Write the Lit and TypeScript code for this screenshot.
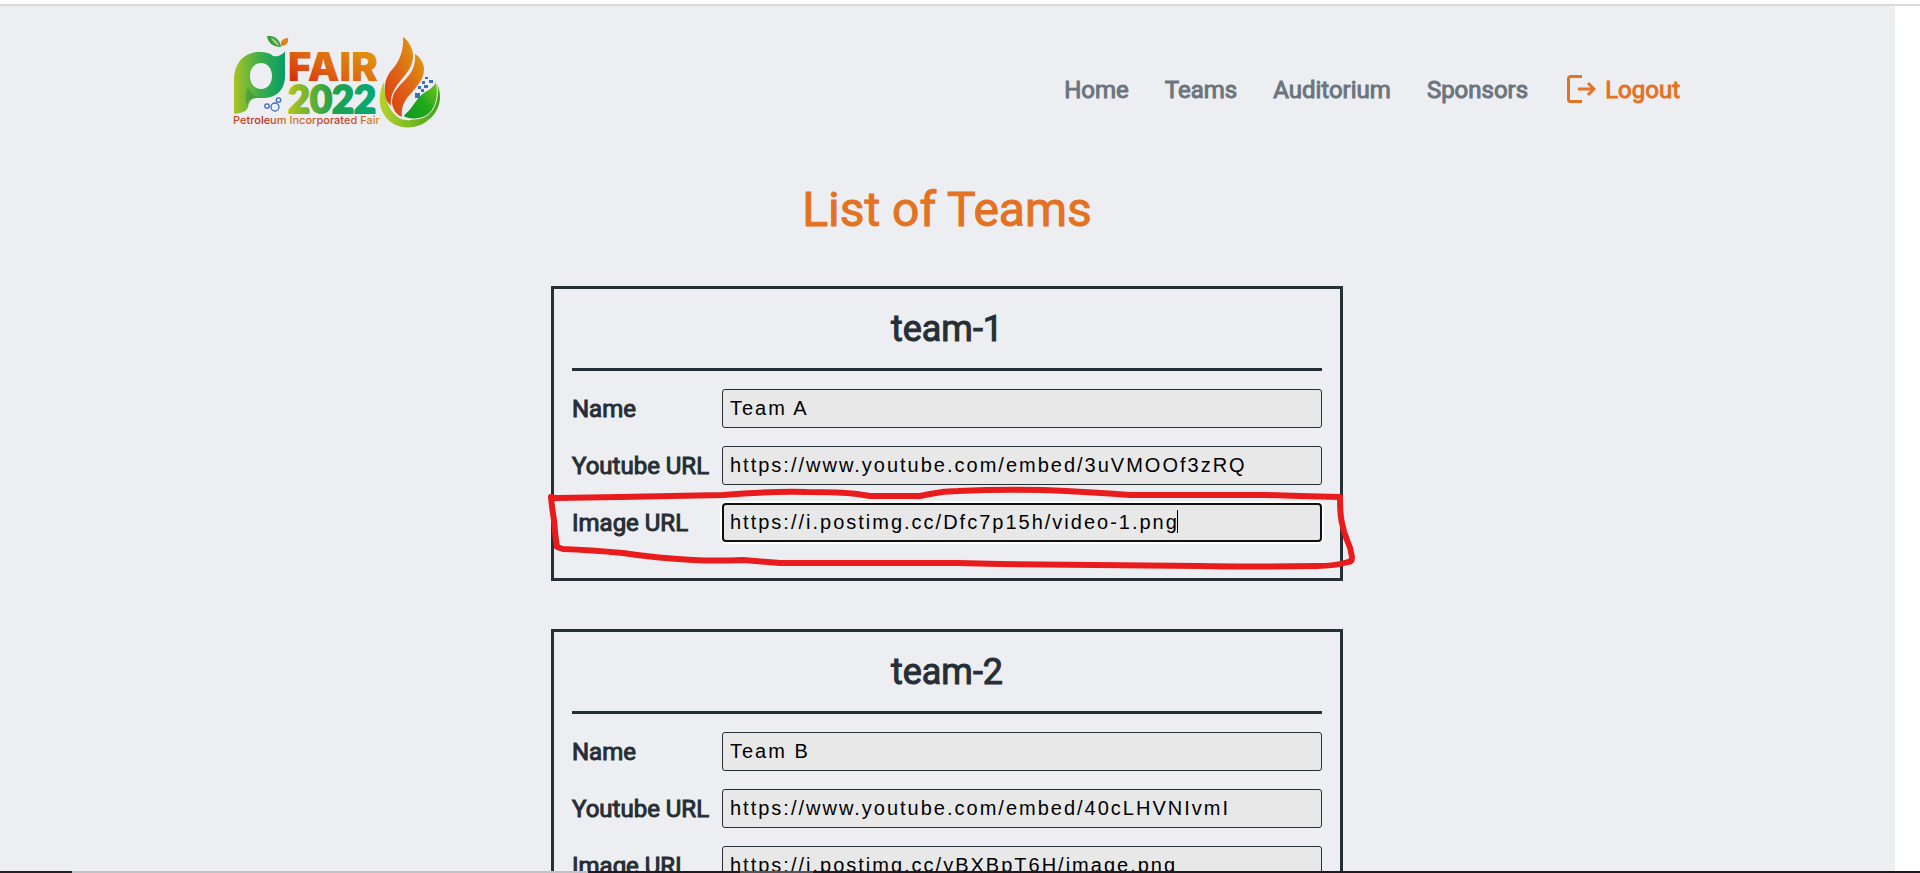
import { LitElement, html, css, svg, nothing } from "lit";
import { customElement, property } from "lit/decorators.js";

interface Team {
  id: string;
  name: string;
  video: string;
  image: string;
}

const teams: Team[] = [
  {
    id: "team-1",
    name: "Team A",
    video: "https://www.youtube.com/embed/3uVMOOf3zRQ",
    image: "https://i.postimg.cc/Dfc7p15h/video-1.png",
  },
  {
    id: "team-2",
    name: "Team B",
    video: "https://www.youtube.com/embed/40cLHVNIvmI",
    image: "https://i.postimg.cc/yBXBpT6H/image.png",
  },
];

@customElement("fair-logo")
export class FairLogo extends LitElement {
  static styles = css`
    :host { display: block; }
    svg { display: block; width: 210px; height: 96px; }
    .fair { font-family: Inter, sans-serif; font-weight: 900; font-size: 40px; }
    .year { font-family: Lato, sans-serif; font-weight: 900; font-size: 38px; stroke-width: 2px; }
    .small { font-family: Inter, sans-serif; font-weight: 500; font-size: 11px; }
  `;

  render() {
    return html`
      <svg viewBox="13 11 210 96" role="img" aria-label="PI Fair 2022">
        <defs>
          <linearGradient id="p" x1="0" x2="1"><stop offset="0" stop-color="#a9c322" /><stop offset=".5" stop-color="#3fae4a" /><stop offset="1" stop-color="#079c68" /></linearGradient>
          <linearGradient id="warm" x1="0" x2="1" y1="1" y2="0"><stop offset="0" stop-color="#d8170e" /><stop offset=".45" stop-color="#dd6410" /><stop offset="1" stop-color="#e3a60a" /></linearGradient>
          <linearGradient id="cool" x1="0" x2="1"><stop offset="0" stop-color="#b5c41c" /><stop offset=".5" stop-color="#23a04a" /><stop offset="1" stop-color="#04a878" /></linearGradient>
          <linearGradient id="tag" x1="0" x2="1"><stop offset="0" stop-color="#cf4a1c" /><stop offset=".2" stop-color="#c22a26" /><stop offset=".4" stop-color="#cf7a22" /><stop offset=".7" stop-color="#c8322a" /><stop offset="1" stop-color="#d09020" /></linearGradient>
          <linearGradient id="fl" x1="0" x2="1" y1="1" y2="0"><stop offset="0" stop-color="#dd3f12" /><stop offset=".5" stop-color="#de6516" /><stop offset="1" stop-color="#e09a10" /></linearGradient>
          <linearGradient id="bowl" x1="0" x2="1"><stop offset="0" stop-color="#b9d22c" /><stop offset="1" stop-color="#3fa414" /></linearGradient>
          <linearGradient id="leaf" x1="0" x2="1" y1="1" y2="0"><stop offset="0" stop-color="#0b9a1a" /><stop offset=".5" stop-color="#1fa81c" /><stop offset="1" stop-color="#7cc31c" /></linearGradient>
        </defs>
        <path fill="url(#p)" fill-rule="evenodd" d="M15 89V55C15 38 25 27 40 27c7 0 11 1 14 4 4 1 10-1 12-5v25c0 15-10 22-22 22h-6c-6 0-8 4-9 9-1 5-8 6-14 7zM42 38c-7 0-11 6-11 13s4 13 11 13 11-6 11-13-4-13-11-13z" />
        <path fill="#1b7a3c" opacity=".35" d="M29 62c2 5 6 10 14 11h-5c-6 0-9 3-10 8-2-6-2-13 1-19z" />
        <path fill="#3a9c40" d="M48 11c8-1 13 4 14 11-8 0-13-4-14-11z" />
        <path fill="#9fd18a" d="M52 13c4 1 7 4 8 8-4-2-6-4-8-8z" />
        <path fill="#e0851a" d="M62 21c-1-5 2-8 7-8 1 5-2 8-7 8z" />
        <g fill="none" stroke="#3b6fc2" stroke-width="1.3"><circle cx="56" cy="82" r="4" /><circle cx="48" cy="81" r="2.200" /><circle cx="59.500" cy="75" r="2.200" /></g>
        <text class="fair" x="69" y="56" fill="url(#warm)">FAIR</text>
        <text class="year" x="69" y="88" fill="url(#cool)" stroke="url(#cool)">2022</text>
        <text class="small" x="14" y="99" fill="url(#tag)">Petroleum Incorporated Fair</text>
        <path fill="url(#bowl)" d="M165 57c-5 9-6 22-1 31 6 11 17 16 30 14 17-3 27-17 27-30 0-7-2-11-4-15-1 16-10 34-25 38-14 2-26-10-27-38z" />
        <path fill="url(#fl)" d="M184 12c1 12-3 22-8 29-7 8-11 14-10 26 0 6 2 10 6 14-1-9 2-15 7-22 8-10 16-18 15-30-1-7-5-14-10-17z" />
        <path fill="url(#fl)" d="M196 29c1 12-4 20-11 27-7 7-12 12-12 22 1 7 5 12 10 14-1-8 1-13 5-19 8-10 17-17 17-29 0-6-4-12-9-15z" />
        <path fill="url(#leaf)" stroke="#edeef2" d="M217 56c-4 10-11 8-18 17-5 6-7 11-15 18 5 4 16 4 23 0 9-5 14-20 10-35z" />
        <g fill="#3b6fc2"><path d="M196 68h5v5h-5zM202 64h3v3h-3zM199 61h3v3h-3zM205 60h4v3h-4zM203 56h3v3h-3zM206 52h3v2h-3zM210 55h4v3h-4z" /></g>
      </svg>
    `;
  }
}

@customElement("team-card")
export class TeamCard extends LitElement {
  @property({ attribute: false }) team!: Team;
  @property({ type: Boolean }) marked = false;

  static styles = css`
    :host { display: block; position: relative; }
    .card { box-sizing: border-box; border: 3px solid #262e36; padding: 18px; }
    .title {
      margin: 0 0 18px;
      padding: 1px 0 17px;
      border-bottom: 3px solid #262e36;
      font-size: 36px;
      line-height: 43px;
      font-weight: 400;
      -webkit-text-stroke: 1px currentColor;
      text-align: center;
    }
    .row { display: flex; align-items: center; margin-bottom: 18px; }
    .label {
      flex: 1 1 0;
      font-size: 24px;
      line-height: 36px;
      font-weight: 400;
      -webkit-text-stroke: 1px currentColor;
      white-space: nowrap;
    }
    .field { position: relative; flex: 0 0 80%; }
    .input {
      display: block;
      box-sizing: border-box;
      width: 100%;
      height: 39px;
      margin: 0;
      padding: 0 7px;
      border: 1px solid #262e36;
      border-radius: 3px;
      background: #e8e8e8;
      color: #000;
      font-family: "Liberation Sans", Arial, sans-serif;
      font-size: 20px;
      letter-spacing: 2px;
      outline: none;
    }
    .input.active { border: 2px solid #101010; border-radius: 4px; padding: 0 6px; box-shadow: 0 0 0 2px #fff; }
    .caret { position: absolute; left: 455px; top: 7px; width: 1px; height: 23px; background: #000; }
    .scribble { position: absolute; left: -6px; top: 194px; width: 816px; height: 100px; pointer-events: none; }
  `;

  private field(key: string, label: string, value: string, active = false) {
    const id = `${this.team.id}-${key}`;
    return html`
      <div class="row">
        <label class="label" for=${id}>${label}</label>
        <div class="field">
          <input class="input ${active ? "active" : ""}" id=${id} type="text" .value=${value} />
          ${active ? html`<span class="caret"></span>` : nothing}
        </div>
      </div>
    `;
  }

  render() {
    const t = this.team;
    return html`
      <section class="card">
        <h2 class="title">${t.id}</h2>
        ${this.field("name", "Name", t.name)}
        ${this.field("video", "Youtube URL", t.video)}
        ${this.field("image", "Image URL", t.image, this.marked)}
      </section>
      ${this.marked
        ? html`<svg class="scribble" viewBox="545 480 816 100" aria-hidden="true">
            ${svg`<path fill="none" stroke="#e81c1c" stroke-width="6" stroke-linejoin="round" stroke-linecap="round"
              d="M551 497Q553 498 557 498L620 497L723 495Q770 491 807 492Q840 492 857 494L870 496H920L930 494Q944 491 958 491Q1000 489 1043 490Q1090 492 1130 495H1267L1300 496L1340 497Q1340 515 1342 523Q1344 533 1347 540Q1351 548 1352 557Q1352 562 1348 562Q1335 566 1317 566Q1250 567 1200 566L1000 564L958 563H780L743 560Q715 561 693 560Q655 558 623 553Q590 550 563 549L557 547Q555 535 554 520Q552 508 551 497Z" />`}
          </svg>`
        : nothing}
    `;
  }
}

@customElement("app-root")
export class AppRoot extends LitElement {
  static styles = css`
    :host {
      display: flex;
      flex-direction: column;
      height: 100vh;
      overflow: hidden;
      background: #fff;
      color: #262e36;
      font-family: Roboto, sans-serif;
    }
    .topline { flex: none; height: 4px; border-bottom: 2px solid #dadadc; }
    .page { flex: 1; min-height: 0; overflow: hidden; margin-right: 25px; padding-right: 1px; background: #edeef2; }
    .header {
      display: flex;
      justify-content: space-between;
      align-items: flex-start;
      max-width: 1448px;
      margin: 0 auto;
      padding: 30px 0 0 18px;
    }
    .nav { display: flex; align-items: center; gap: 36px; margin-top: 36px; }
    .link {
      display: flex;
      align-items: center;
      gap: 9px;
      color: #6c757d;
      font-size: 24px;
      line-height: 36px;
      font-weight: 400;
      -webkit-text-stroke: 1px currentColor;
      text-decoration: none;
    }
    .link.logout { color: #e37222; margin-left: 2px; }
    .icon { width: 30px; height: 30px; }
    .heading {
      margin: 49px 0 47px;
      color: #e37222;
      font-size: 48px;
      line-height: 58px;
      font-weight: 400;
      -webkit-text-stroke: 1px currentColor;
      text-align: center;
    }
    .list { display: flex; flex-direction: column; gap: 48px; width: 792px; max-width: 100%; margin: 0 auto; }
    .bottomline {
      flex: none;
      height: 2px;
      background: linear-gradient(90deg, #231f25 72px, #c4c2c2 72px 588px, #1f1a1e 588px 740px, #555 740px 813px, #201a1e 813px);
    }
  `;

  render() {
    return html`
      <div class="topline"></div>
      <div class="page">
        <header class="header">
          <fair-logo></fair-logo>
          <nav class="nav">
            ${["Home", "Teams", "Auditorium", "Sponsors"].map((n) => html`<a class="link" href="#">${n}</a>`)}
            <a class="link logout" href="#">
              <svg class="icon" viewBox="0 0 30 30" fill="none" stroke="currentColor" stroke-width="3" aria-hidden="true">
                <path stroke-linejoin="round" d="M16 1.500H4.500a2 2 0 0 0-2 2V24.500a2 2 0 0 0 2 2H16" />
                <path d="M12 14h16M22 8l6 6-6 6" />
              </svg>
              Logout
            </a>
          </nav>
        </header>
        <main>
          <h1 class="heading">List of Teams</h1>
          <div class="list">
            ${teams.map((t, i) => html`<team-card .team=${t} ?marked=${i === 0}></team-card>`)}
          </div>
        </main>
      </div>
      <div class="bottomline"></div>
    `;
  }
}
